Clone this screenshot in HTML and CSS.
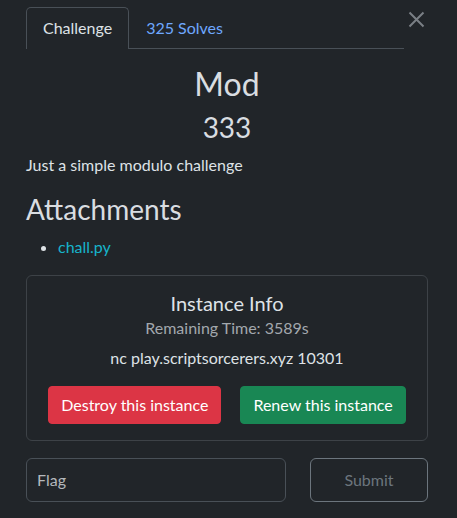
FILE: index.html
```html
<!DOCTYPE html>
<html lang="en">
<head>
<meta charset="utf-8">
<title>Mod</title>
<link rel="stylesheet" href="styles.css">
</head>
<body>
<div class="modal">
  <div class="header">
    <ul class="tabs">
      <li class="tab active">Challenge</li>
      <li class="tab link">325 Solves</li>
    </ul>
    <button class="close" aria-label="Close">
      <svg width="17" height="17" viewBox="0 0 17 17"><path d="M1.5 1.5 L15.5 15.5 M15.5 1.5 L1.5 15.5" stroke="#7a7f85" stroke-width="2" fill="none"/></svg>
    </button>
  </div>
  <h2 class="name">Mod</h2>
  <h3 class="value">333</h3>
  <p class="desc">Just a simple modulo challenge</p>
  <h3 class="section">Attachments</h3>
  <ul class="files">
    <li><a class="file">chall.py</a></li>
  </ul>
  <div class="instance">
    <h5 class="inst-title">Instance Info</h5>
    <p class="remaining">Remaining Time: 3589s</p>
    <p class="conn">nc play.scriptsorcerers.xyz 10301</p>
    <div class="actions">
      <button class="btn danger">Destroy this instance</button>
      <button class="btn success">Renew this instance</button>
    </div>
  </div>
  <div class="submit-row">
    <input class="flag" type="text" placeholder="Flag">
    <button class="submit">Submit</button>
  </div>
</div>
</body>
</html>
```
FILE: styles.css
```css
* { box-sizing: border-box; }
html, body { margin: 0; padding: 0; background: #212529; }
body {
  font-family: Lato, "Open Sans", "Liberation Sans", sans-serif;
  font-size: 16px;
  line-height: 1.5;
  color: #dee2e6;
}
.modal {
  width: 402px;
  margin-left: 26px;
  padding-top: 7px;
}
.header {
  display: flex;
  align-items: flex-start;
}
.tabs {
  list-style: none;
  margin: 0;
  padding: 0;
  display: flex;
  width: 378px;
  border-bottom: 1px solid #495057;
}
.tab {
  padding: 8px 16px;
  border: 1px solid transparent;
  border-bottom: none;
  border-top-left-radius: 5px;
  border-top-right-radius: 5px;
  margin-bottom: -1px;
}
.tab.active {
  border-color: #495057;
  background: #212529;
  color: #dee2e6;
  padding-bottom: 9px;
}
.tab.link { color: #6ea8fe; }
.close {
  background: none;
  border: none;
  padding: 0;
  margin: 4px 0 0 4px;
  width: 17px;
  height: 17px;
  display: block;
}
.close svg { display: block; }
.name {
  margin: 0 0 8px;
  padding-top: 16px;
  text-align: center;
  font-size: 32px;
  font-weight: 400;
  line-height: 1.2;
  color: #d9dde1;
}
.value {
  margin: 0 0 8px;
  text-align: center;
  font-size: 28px;
  font-weight: 400;
  line-height: 1.2;
  color: #d9dde1;
}
.desc { margin: 0 0 16px; }
.section {
  margin: 0 0 8px;
  font-size: 28px;
  font-weight: 400;
  line-height: 1.2;
  color: #d9dde1;
}
.files {
  margin: 0 0 16px;
  padding-left: 32px;
}
.file { color: #17b4cb; text-decoration: none; }
.instance {
  border: 1px solid #3d4247;
  border-radius: 6px;
  padding: 15px 16px 16px;
  text-align: center;
}
.inst-title {
  margin: 0;
  font-size: 20px;
  font-weight: 400;
  line-height: 1.2;
}
.remaining {
  margin: 1px 0 6px;
  color: #a3a8ad;
}
.conn { margin: 0 0 16px; }
.actions {
  display: flex;
  justify-content: center;
  gap: 19px;
}
.btn {
  font-family: inherit;
  font-size: 16px;
  line-height: 24px;
  padding: 6px 12px;
  border: 1px solid transparent;
  border-radius: 4px;
  color: #fff;
}
.danger { background: #dc3545; border-color: #dc3545; }
.success { background: #198754; border-color: #198754; }
.submit-row {
  display: flex;
  justify-content: space-between;
  margin-top: 17px;
}
.flag {
  width: 260px;
  height: 44px;
  background: #212529;
  border: 1px solid #495057;
  border-radius: 6px;
  padding: 0 10px;
  font-family: inherit;
  font-size: 16px;
  color: #dee2e6;
}
.flag::placeholder { color: #b4b8bc; }
.submit {
  width: 118px;
  height: 44px;
  background: transparent;
  border: 1px solid #6c757d;
  border-radius: 6px;
  font-family: inherit;
  font-size: 16px;
  color: #6c757d;
}
```
